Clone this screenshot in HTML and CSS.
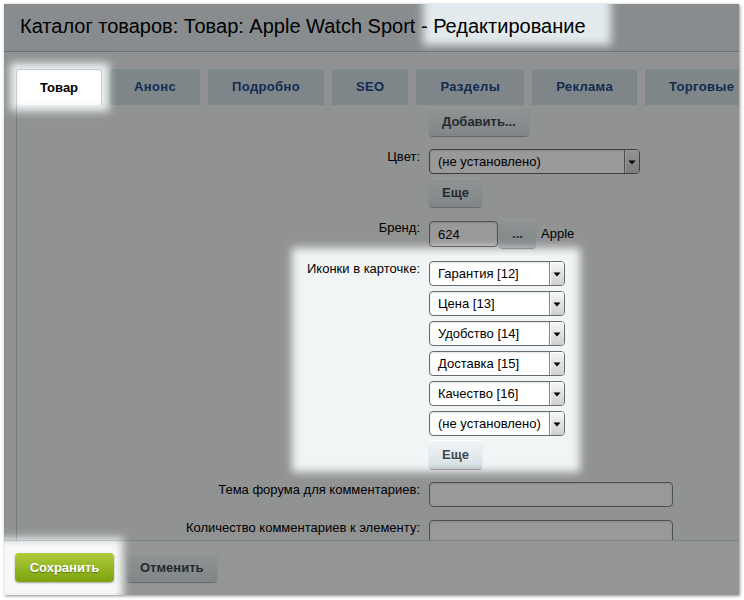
FILE: index.html
```html
<!DOCTYPE html>
<html lang="ru">
<head>
<meta charset="utf-8">
<title>Каталог товаров: Товар: Apple Watch Sport - Редактирование</title>
<link rel="stylesheet" href="styles.css">
</head>
<body>
<div class="frame">
  <header class="hdr"><h1 class="title">Каталог товаров: Товар: Apple Watch Sport - Редактирование</h1></header>
  <nav class="tabs">
    <div class="tab active">Товар</div>
    <div class="tab">Анонс</div>
    <div class="tab">Подробно</div>
    <div class="tab">SEO</div>
    <div class="tab">Разделы</div>
    <div class="tab">Реклама</div>
    <div class="tab">Торговые предложения</div>
  </nav>
  <section class="panel">
    <div class="form">
      <div class="lbl"></div>
      <div class="fld"><button class="btn">Добавить...</button></div>

      <div class="lbl">Цвет:</div>
      <div class="fld col">
        <div class="sel w210"><span class="val">(не установлено)</span><span class="arr"><svg width="14" height="21" viewBox="0 0 14 21"><path d="M3.5 9.5h7l-3.5 4z" fill="#000"/></svg></span></div>
        <button class="btn">Еще</button>
      </div>

      <div class="lbl">Бренд:</div>
      <div class="fld row">
        <div class="inp w68">624</div>
        <button class="btn dots">...</button>
        <span class="txt">Apple</span>
      </div>

      <div class="lbl">Иконки в карточке:</div>
      <div class="fld col icons">
        <div class="sel w135"><span class="val">Гарантия [12]</span><span class="arr"><svg width="14" height="21" viewBox="0 0 14 21"><path d="M3.5 9.5h7l-3.5 4z" fill="#000"/></svg></span></div>
        <div class="sel w135"><span class="val">Цена [13]</span><span class="arr"><svg width="14" height="21" viewBox="0 0 14 21"><path d="M3.5 9.5h7l-3.5 4z" fill="#000"/></svg></span></div>
        <div class="sel w135"><span class="val">Удобство [14]</span><span class="arr"><svg width="14" height="21" viewBox="0 0 14 21"><path d="M3.5 9.5h7l-3.5 4z" fill="#000"/></svg></span></div>
        <div class="sel w135"><span class="val">Доставка [15]</span><span class="arr"><svg width="14" height="21" viewBox="0 0 14 21"><path d="M3.5 9.5h7l-3.5 4z" fill="#000"/></svg></span></div>
        <div class="sel w135"><span class="val">Качество [16]</span><span class="arr"><svg width="14" height="21" viewBox="0 0 14 21"><path d="M3.5 9.5h7l-3.5 4z" fill="#000"/></svg></span></div>
        <div class="sel w135"><span class="val">(не установлено)</span><span class="arr"><svg width="14" height="21" viewBox="0 0 14 21"><path d="M3.5 9.5h7l-3.5 4z" fill="#000"/></svg></span></div>
        <button class="btn more">Еще</button>
      </div>

      <div class="lbl">Тема форума для комментариев:</div>
      <div class="fld"><div class="inp w244"></div></div>

      <div class="lbl">Количество комментариев к элементу:</div>
      <div class="fld"><div class="inp w244"></div></div>
    </div>
  </section>
  <footer class="ftr">
    <button class="btn save">Сохранить</button>
    <button class="btn">Отменить</button>
  </footer>
  <svg class="dim" width="735" height="591" viewBox="0 0 735 591">
    <defs>
      <filter id="soft" filterUnits="userSpaceOnUse" x="-50" y="-50" width="835" height="691">
        <feGaussianBlur stdDeviation="4"/>
      </filter>
      <mask id="holes" maskUnits="userSpaceOnUse" x="0" y="0" width="735" height="591">
        <rect x="0" y="0" width="735" height="591" fill="#fff"/>
        <g filter="url(#soft)" fill="#000">
          <rect x="419" y="-14" width="188" height="55"/>
          <rect x="6" y="59" width="99" height="48"/>
          <rect x="288" y="244" width="288" height="224"/>
          <rect x="-6" y="534" width="125" height="62"/>
        </g>
      </mask>
    </defs>
    <rect x="0" y="0" width="735" height="591" fill="#000" fill-opacity="0.4" mask="url(#holes)"/>
  </svg>
</div>
</body>
</html>
```
FILE: styles.css
```css
html, body {
  margin: 0;
  padding: 0;
  background: #ffffff;
}
body {
  width: 744px;
  height: 600px;
  overflow: hidden;
  font-family: "Liberation Sans", Arial, sans-serif;
  font-size: 13px;
  color: #000;
}
.frame {
  position: relative;
  margin: 4px 0 0 4px;
  width: 735px;
  height: 591px;
  display: flex;
  flex-direction: column;
  background: #eef2f3;
  overflow: hidden;
  box-shadow: 1px 1px 3px rgba(0,0,0,0.45);
}
.hdr {
  flex: none;
  height: 47px;
  border-bottom: 1px solid #b8bdc0;
  background: #e3eaed;
  padding-left: 16px;
}
.title {
  margin: 0;
  font-size: 20px;
  font-weight: normal;
  line-height: 44px;
  white-space: nowrap;
  color: #000;
}
.tabs {
  flex: none;
  display: flex;
  gap: 8px;
  margin-top: 17px;
  padding-left: 12px;
  height: 36px;
  white-space: nowrap;
  overflow: hidden;
}
.tab {
  flex: none;
  height: 36px;
  box-sizing: border-box;
  padding: 0 24px;
  line-height: 36px;
  font-weight: bold;
  font-size: 13px;
  letter-spacing: 0.35px;
  color: #234888;
  background: #d3e0e5;
  border-radius: 3px 3px 0 0;
}
.tab.active {
  background: #ffffff;
  color: #000;
  letter-spacing: 0;
  border: 1px solid #c8d1d5;
  border-bottom: none;
  padding: 0 23px;
  line-height: 35px;
}
.panel {
  flex: 1;
  min-height: 0;
  overflow: hidden;
  margin-left: 12px;
  border-left: 1px solid #c5d0d4;
  background: #f2f5f6;
  padding-top: 2px;
}
.form {
  display: grid;
  grid-template-columns: 403px 1fr;
  column-gap: 9px;
  row-gap: 13px;
}
.lbl {
  text-align: right;
  line-height: 16px;
  white-space: nowrap;
}
.fld {
  display: flex;
  align-items: flex-start;
}
.fld.col {
  flex-direction: column;
  gap: 4px;
}
.fld.icons {
  gap: 5px;
}
.fld.icons .more {
  margin-top: -1px;
}
.fld.row {
  align-items: center;
  height: 29px;
  margin-top: -1px;
}
.btn {
  height: 29px;
  padding: 0 13px;
  border: none;
  border-radius: 4px;
  background: linear-gradient(#f2f6f7, #d6dfe2);
  box-shadow: 0 1px 1px rgba(0,0,0,0.3), inset 0 1px 0 #ffffff;
  font-family: "Liberation Sans", Arial, sans-serif;
  font-size: 13px;
  font-weight: bold;
  color: #3d4950;
  cursor: pointer;
}
.btn.dots {
  width: 37px;
  padding: 0;
  margin-left: 1px;
}
.btn.save {
  width: 99px;
  padding: 0;
  background: linear-gradient(#aecb3c, #7ea30f);
  color: #ffffff;
  text-shadow: 0 1px 1px rgba(0,0,0,0.35);
  box-shadow: 0 1px 2px rgba(0,0,0,0.35);
}
.txt {
  margin-left: 5px;
  line-height: 16px;
}
.sel {
  height: 25px;
  box-sizing: border-box;
  display: flex;
  border: 1px solid #676c70;
  border-radius: 4px;
  background: #ffffff;
  box-shadow: inset 0 1px 2px rgba(0,0,0,0.12);
  overflow: hidden;
}
.sel .val {
  flex: 1;
  padding-left: 8px;
  line-height: 23px;
  white-space: nowrap;
  overflow: hidden;
}
.sel .arr {
  flex: none;
  width: 15px;
  box-sizing: border-box;
  border-left: 1px solid #7d8286;
  background: linear-gradient(#f7f7f7, #cfcfcf);
  box-shadow: inset 1px 1px 0 #ffffff;
  display: flex;
  align-items: center;
  justify-content: center;
}
.sel .arr svg {
  display: block;
}
.w210 { width: 211px; }
.w135 { width: 136px; }
.inp {
  height: 26px;
  box-sizing: border-box;
  border: 1px solid #80888c;
  border-radius: 4px;
  background: #ffffff;
  box-shadow: inset 0 1px 2px rgba(0,0,0,0.12);
  padding-left: 8px;
  line-height: 26px;
}
.w68 { width: 69px; }
.w244 { width: 244px; height: 25px; }
.ftr {
  flex: none;
  box-sizing: content-box;
  border-top: 1px solid #d0dbe0;
  background: #f7f8f8;
  display: flex;
  align-items: flex-start;
  gap: 13px;
  padding: 12px 0 0 11px;
  height: 42px;
}
.dim {
  position: absolute;
  left: 0;
  top: 0;
  pointer-events: none;
}
```
